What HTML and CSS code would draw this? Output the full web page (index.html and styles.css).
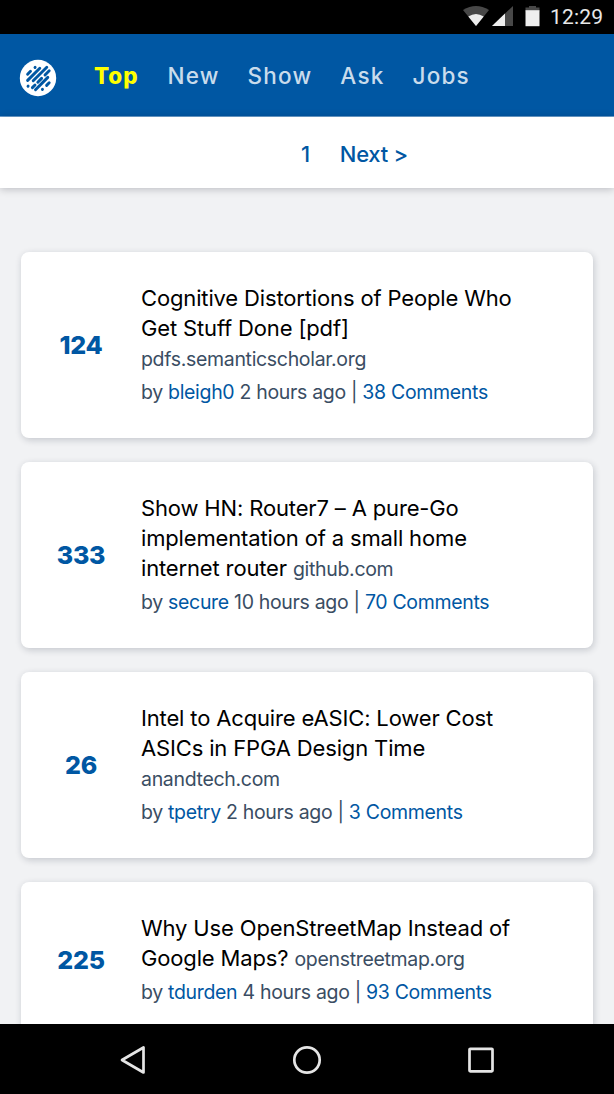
FILE: index.html
```
<!DOCTYPE html>
<html lang="en">
<head>
<meta charset="utf-8">
<title>Hacker News</title>
<link rel="stylesheet" href="styles.css">
</head>
<body>
<div class="status">
  <svg class="signals" width="80" height="24" viewBox="0 0 80 24">
    <path fill="#484848" d="M0 4Q13 -4 26 4L13 20Z"/>
    <path fill="#eee" d="M5.3 10.6Q13 5.2 20.7 10.6L13 20Z"/>
    <path fill="#484848" d="M50 0V20H29Z"/>
    <path fill="#eee" d="M42 7.5V20H29Z"/>
    <path fill="#484848" d="M62.5 1.5h3.5V-.5h7v2h3.5v4h-14Z"/>
    <path fill="#eee" d="M62.5 4.2h14v16h-14Z"/>
  </svg>
  <span class="clock">12:29</span>
</div>
<main class="app">
  <nav class="nav">
    <svg class="logo" width="38" height="38" viewBox="0 0 38 38">
      <circle cx="19" cy="19" r="18.2" fill="#fff"/>
      <g stroke="#0057a3" stroke-width="2.9" stroke-linecap="round" fill="none">
        <path d="M8.6 15.2L11.5 12.3M16 8.5L16.1 8.4M8.6 21.4L20.8 9.2M14.2 21.8L27.8 8.2M9 27.2L9.1 27.1M13.4 28.6L16 26M18.8 23.2L22.6 19.4M26 16L30.2 11.8M16.5 30.7L28.8 18.4M23.4 30.4L23.5 30.3M27.6 26.4L30.2 23.8"/>
      </g>
    </svg>
    <a class="link active">Top</a>
    <a class="link">New</a>
    <a class="link">Show</a>
    <a class="link">Ask</a>
    <a class="link">Jobs</a>
  </nav>
  <div class="pager"><span>1</span><a class="next">Next &gt;</a></div>
  <section class="list">
    <article class="card">
      <div class="score">124</div>
      <div class="body">
        <div class="title">Cognitive Distortions of People Who<br>Get Stuff Done [pdf]<br><span class="host">pdfs.semanticscholar.org</span></div>
        <div class="meta">by <a>bleigh0</a> 2 hours ago | <a>38 Comments</a></div>
      </div>
    </article>
    <article class="card">
      <div class="score">333</div>
      <div class="body">
        <div class="title">Show HN: Router7 – A pure-Go<br>implementation of a small home<br>internet router <span class="host">github.com</span></div>
        <div class="meta">by <a>secure</a> 10 hours ago | <a>70 Comments</a></div>
      </div>
    </article>
    <article class="card">
      <div class="score">26</div>
      <div class="body">
        <div class="title">Intel to Acquire eASIC: Lower Cost<br>ASICs in FPGA Design Time<br><span class="host">anandtech.com</span></div>
        <div class="meta">by <a>tpetry</a> 2 hours ago | <a>3 Comments</a></div>
      </div>
    </article>
    <article class="card">
      <div class="score">225</div>
      <div class="body">
        <div class="title">Why Use OpenStreetMap Instead of<br>Google Maps? <span class="host">openstreetmap.org</span></div>
        <div class="meta">by <a>tdurden</a> 4 hours ago | <a>93 Comments</a></div>
      </div>
    </article>
  </section>
</main>
<footer class="keys">
  <svg width="30" height="32" viewBox="0 0 30 32"><path d="M25.5 3.5V28.5L4 16Z"/></svg>
  <svg width="30" height="32" viewBox="0 0 30 32"><circle cx="15" cy="16" r="12.7"/></svg>
  <svg width="30" height="32" viewBox="0 0 30 32"><rect x="3.5" y="4.8" width="23" height="22.6" rx=".8"/></svg>
</footer>
</body>
</html>
```
FILE: styles.css
```
* { box-sizing: border-box; }
body {
  margin: 0;
  height: 1094px;
  display: flex;
  flex-direction: column;
  overflow: hidden;
  background: #000;
  font-family: Inter, "Liberation Sans", sans-serif;
}
.status {
  height: 34px;
  flex: none;
  display: flex;
  justify-content: flex-end;
  align-items: flex-start;
  padding: 6px 10px 0 0;
}
.signals { margin-right: 7px; }
.clock {
  width: 54px;
  color: #e8e8e8;
  font: 450 21px/22px Roboto, sans-serif;
  letter-spacing: .2px;
}
.app {
  flex: 1;
  min-height: 0;
  overflow: hidden;
  background: #f1f2f4;
}
.nav {
  height: 83px;
  display: flex;
  align-items: center;
  padding: 2px 0 0 19px;
  background: #0057a3;
  border-bottom: 1px solid #6b9fce;
}
.logo { margin: 3px 37px 0 0; }
.link {
  color: #c9dcec;
  font-size: 22.5px;
  font-weight: 450;
  line-height: 30px;
  letter-spacing: 1.2px;
  margin-right: 28px;
}
.active { color: #ff0; font-weight: 800; letter-spacing: .9px; margin-right: 29px; }
.pager {
  height: 71px;
  display: flex;
  align-items: center;
  gap: 30px;
  padding: 2px 0 0 301px;
  background: #fff;
  color: #0057a3;
  font-size: 22px;
  font-weight: 450;
  letter-spacing: -.3px;
  box-shadow: 0 1px 8px rgba(0, 0, 20, .24);
}
.list {
  display: flex;
  flex-direction: column;
  gap: 24px;
  padding: 64px 21px 0;
}
.card {
  display: flex;
  align-items: center;
  padding: 31px 0;
  flex: none;
  background: #fff;
  border-radius: 8px;
  box-shadow: 1px 2px 7px rgba(20, 30, 50, .2);
}
.score {
  width: 120px;
  text-align: center;
  color: #0057a3;
  font-size: 25px;
  font-weight: 800;
  letter-spacing: -.2px;
}
.title {
  color: #000;
  font-size: 22px;
  font-weight: 430;
  line-height: 30px;
  letter-spacing: -.15px;
  white-space: nowrap;
}
.host, .meta { color: #3a4d63; font-size: 19.5px; font-weight: 430; letter-spacing: -.32px; }
.host { line-height: 20px; }
.meta { height: 34px; line-height: 38px; white-space: nowrap; }
.meta a { color: #0057a3; }
.keys {
  height: 70px;
  flex: none;
  display: flex;
  align-items: center;
  justify-content: center;
  gap: 144px;
  padding-top: 2px;
}
.keys svg { fill: none; stroke: #e5e5e5; stroke-width: 2.7; stroke-linejoin: round; }
```
